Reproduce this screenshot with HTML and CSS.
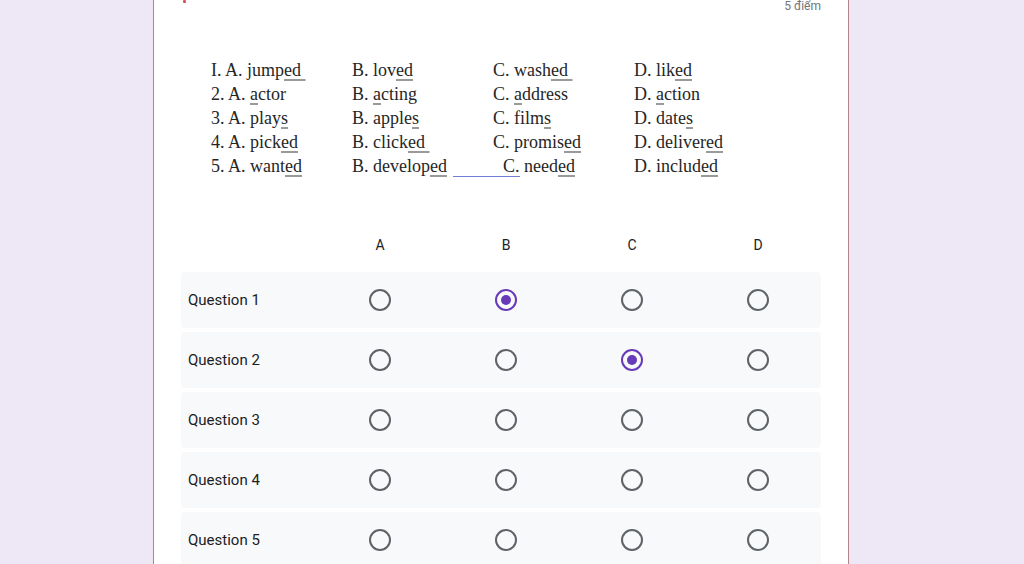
FILE: index.html
```html
<!DOCTYPE html>
<html lang="vi">
<head>
  <meta charset="UTF-8">
  <title>Quiz</title>
  <link rel="stylesheet" href="styles.css">
</head>
<body>
  <div class="card">
    <div class="top">
      <span class="req"></span>
      <span class="points">5 điểm</span>
    </div>

    <div class="passage">
      <span>I. A. jump<u>ed&nbsp;</u></span>
      <span>B. lov<u>ed</u></span>
      <span>C. wash<u>ed&nbsp;</u></span>
      <span>D. lik<u>ed</u></span>

      <span>2. A. <u>a</u>ctor</span>
      <span>B. <u>a</u>cting</span>
      <span>C. <u>a</u>ddress</span>
      <span>D. <u>a</u>ction</span>

      <span>3. A. play<u>s</u></span>
      <span>B. apple<u>s</u></span>
      <span>C. film<u>s</u></span>
      <span>D. date<u>s</u></span>

      <span>4. A. pick<u>ed</u></span>
      <span>B. click<u>ed&nbsp;</u></span>
      <span>C. promis<u>ed</u></span>
      <span>D. deliver<u>ed</u></span>

      <span>5. A. want<u>ed</u></span>
      <span>B. develop<u>ed</u></span>
      <span class="shift"><span class="blank">C.</span> need<u>ed</u></span>
      <span>D. includ<u>ed</u></span>
    </div>

    <div class="matrix">
      <div class="mrow head">
        <span></span>
        <span>A</span>
        <span>B</span>
        <span>C</span>
        <span>D</span>
      </div>
      <div class="mrow item">
        <span class="label">Question 1</span>
        <span><i class="radio"></i></span>
        <span><i class="radio on"></i></span>
        <span><i class="radio"></i></span>
        <span><i class="radio"></i></span>
      </div>
      <div class="mrow item">
        <span class="label">Question 2</span>
        <span><i class="radio"></i></span>
        <span><i class="radio"></i></span>
        <span><i class="radio on"></i></span>
        <span><i class="radio"></i></span>
      </div>
      <div class="mrow item">
        <span class="label">Question 3</span>
        <span><i class="radio"></i></span>
        <span><i class="radio"></i></span>
        <span><i class="radio"></i></span>
        <span><i class="radio"></i></span>
      </div>
      <div class="mrow item">
        <span class="label">Question 4</span>
        <span><i class="radio"></i></span>
        <span><i class="radio"></i></span>
        <span><i class="radio"></i></span>
        <span><i class="radio"></i></span>
      </div>
      <div class="mrow item">
        <span class="label">Question 5</span>
        <span><i class="radio"></i></span>
        <span><i class="radio"></i></span>
        <span><i class="radio"></i></span>
        <span><i class="radio"></i></span>
      </div>
    </div>
  </div>
</body>
</html>
```

FILE: styles.css
```css
body {
  margin: 0;
  padding: 0;
  background: #ede7f6;
  font-family: Roboto, "Liberation Sans", sans-serif;
  color: #202124;
  overflow: hidden;
}

.card {
  margin-left: 153px;
  width: 640px;
  min-height: 600px;
  padding: 0 27px;
  background: #fff;
  border-left: 1px solid #b0868c;
  border-right: 1px solid #b0868c;
  box-shadow: 0 0 2px #f3dce2;
}

.top {
  display: flex;
  justify-content: space-between;
  align-items: flex-start;
  height: 16px;
  margin-top: -2px;
  font-size: 12px;
  line-height: 16px;
}

/* the tail of the required-mark, cut off by the top edge */
.req {
  display: block;
  width: 3px;
  height: 3px;
  margin-top: 2px;
  margin-left: 2px;
  border-radius: 1px;
  background: #d9534f;
}

.points {
  color: #70757a;
}

.passage {
  display: grid;
  grid-template-columns: 141px 141px 141px 141px;
  margin-top: 44px;
  padding-left: 30px;
  font-family: "Liberation Serif", "Times New Roman", serif;
  font-size: 18px;
  line-height: 24px;
  color: #262626;
}

.passage u {
  text-decoration: underline;
  text-decoration-color: #9a9a9a;
  text-decoration-thickness: 2px;
  text-underline-offset: 3px;
}

.shift {
  margin-left: -40px;
}

.blank {
  display: inline-block;
  padding-left: 50px;
  line-height: 19px;
  border-bottom: 1px solid #6f7fd8;
}

.matrix {
  margin-top: 57px;
}

.mrow {
  display: grid;
  grid-template-columns: 136px repeat(4, 1fr);
  align-items: center;
  justify-items: center;
}

.head {
  height: 20px;
  margin-bottom: 17px;
  font-size: 14px;
  line-height: 20px;
}

.item {
  height: 56px;
  margin-bottom: 4px;
  background: #f8f9fa;
  border-radius: 4px;
}

.label {
  justify-self: start;
  padding-left: 7px;
  font-size: 15px;
}

.radio {
  display: block;
  box-sizing: border-box;
  width: 22px;
  height: 22px;
  border: 2px solid #5f6368;
  border-radius: 50%;
  position: relative;
}

.radio.on {
  border-color: #673ab7;
}

.radio.on::after {
  content: "";
  position: absolute;
  left: 4px;
  top: 4px;
  width: 10px;
  height: 10px;
  border-radius: 50%;
  background: #673ab7;
}
```
